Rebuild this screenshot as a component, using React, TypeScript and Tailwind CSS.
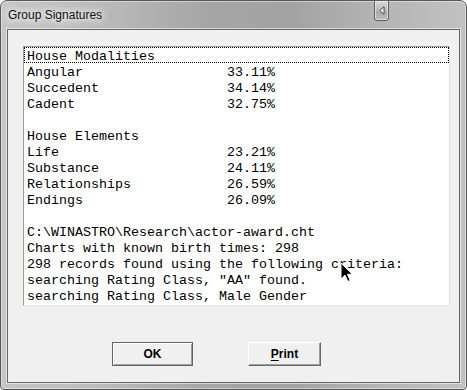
import React from 'react'

const rows: string[] = [
  'House Modalities',
  'Angular'.padEnd(25) + '33.11%',
  'Succedent'.padEnd(25) + '34.14%',
  'Cadent'.padEnd(25) + '32.75%',
  '',
  'House Elements',
  'Life'.padEnd(25) + '23.21%',
  'Substance'.padEnd(25) + '24.11%',
  'Relationships'.padEnd(25) + '26.59%',
  'Endings'.padEnd(25) + '26.09%',
  '',
  'C:\\WINASTRO\\Research\\actor-award.cht',
  'Charts with known birth times: 298',
  '298 records found using the following criteria:',
  'searching Rating Class, "AA" found.',
  'searching Rating Class, Male Gender',
]

const Cursor = () => (
  <svg
    className="absolute left-[340px] top-[262px]"
    width="13"
    height="21"
    viewBox="0 0 13 21"
  >
    <path
      d="M1 1 L1 17 L5 13.2 L7.8 19.5 L10.2 18.5 L7.5 12.3 L12.4 12.3 Z"
      fill="#000"
      stroke="#fff"
      strokeWidth="1"
      strokeLinejoin="miter"
    />
  </svg>
)

const App = () => {
  return (
    <div className="relative w-[467px] h-[390px] bg-white">
      {/* window frame */}
      <div className="w-[467px] h-[390px] flex flex-col rounded-t-[7px] rounded-b-[4px] border border-[#575757] shadow-[inset_0_0_0_1px_rgba(255,255,255,0.45)] bg-[linear-gradient(90deg,#c6c6c6_0%,#bababa_22%,#a5a5a5_45%,#a2a2a2_62%,#b3b3b3_80%,#c2c2c2_100%)]">
        {/* title bar */}
        <div className="h-[28px] flex items-start shrink-0">
          <span className="mt-[6px] ml-[7px] text-[12px] leading-[16px] text-[#111] font-['Liberation_Sans',Arial,sans-serif] [text-shadow:0_0_6px_#fff,0_0_10px_#fff,0_0_14px_rgba(255,255,255,0.8)]">
            Group Signatures
          </span>
          <div className="ml-auto mr-[77px] -mt-[1px] w-[15px] h-[21px] rounded-b-[3px] border border-[#5e5e5e] shadow-[inset_0_0_0_1px_rgba(255,255,255,0.5)] bg-[linear-gradient(180deg,#d8d8d8_0%,#b8b8b8_50%,#a8a8a8_51%,#bcbcbc_100%)] flex items-center justify-center">
            <svg width="6" height="9" viewBox="0 0 6 9">
              <path d="M5 0.8 L5 8.2 L0.8 4.5 Z" fill="#fff" stroke="#3a3a3a" strokeWidth="0.9" />
            </svg>
          </div>
        </div>

        {/* client area */}
        <div className="flex-1 mx-[6px] mb-[6px] border border-[#666] bg-[#f0f0f0] shadow-[0_0_0_1px_rgba(255,255,255,0.55)] flex flex-col">
          {/* list box */}
          <div className="ml-[15px] mt-[16px] w-[427px] h-[260px] bg-white border border-t-[#a0a0a0] border-l-[#a0a0a0] border-r-[#e3e3e3] border-b-[#e3e3e3] font-['Liberation_Mono','Courier_New',monospace] text-[13.33px] text-black">
            {rows.map((r, i) => (
              <div
                key={i}
                className={`h-[16px] pl-[2px] whitespace-pre border leading-[18px] ${
                  i === 0 ? 'border-dotted border-black' : 'border-transparent'
                }`}
              >
                {r}
              </div>
            ))}
          </div>

          {/* buttons */}
          <div className="flex mt-[36px] ml-[104px] gap-[55px] font-['Liberation_Sans',Arial,sans-serif] text-[12px] font-bold text-black">
            <button className="w-[81px] h-[24px] bg-[#f0f0f0] border border-[#646464] shadow-[inset_1px_1px_0_#fff,inset_-1px_-1px_0_#a0a0a0] flex items-center justify-center">
              OK
            </button>
            <button className="w-[73px] h-[24px] bg-[#f0f0f0] border border-t-white border-l-white border-r-[#696969] border-b-[#696969] shadow-[inset_-1px_-1px_0_#a0a0a0] flex items-center justify-center">
              <span className="underline underline-offset-[2px]">P</span>rint
            </button>
          </div>
        </div>
      </div>
      <Cursor />
    </div>
  )
}

export default App
